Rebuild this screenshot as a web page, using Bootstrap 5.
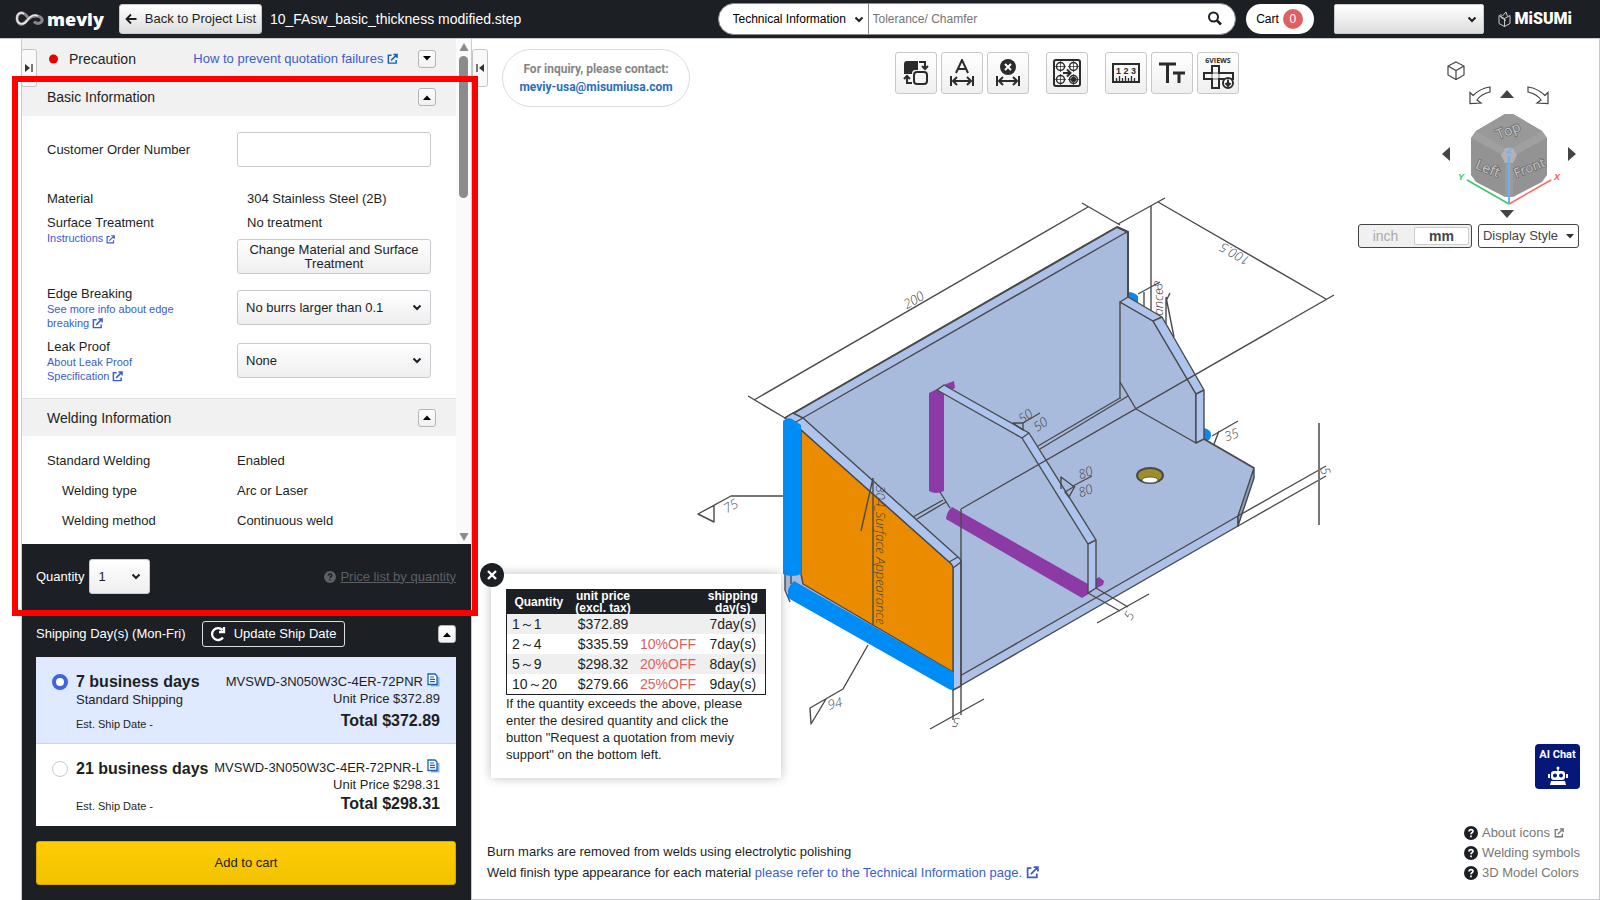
<!DOCTYPE html>
<html lang="en">
<head>
<meta charset="utf-8">
<meta name="viewport" content="width=device-width, initial-scale=1">
<title>meviy - 10_FAsw_basic_thickness modified.step</title>
<link href="https://cdn.jsdelivr.net/npm/bootstrap@5.3.0/dist/css/bootstrap.min.css" rel="stylesheet">
<style>
  :root { --ink: #1c1f24; --line: #c9c9cf; --link: #3c5ccf; }
  body { font-family: "Liberation Sans", Arial, sans-serif; font-size: 13px; line-height: 16px; color: var(--ink); background: #fff; }
  a { color: var(--link); text-decoration: none; }
  svg { display: block; flex: none; }
  .ext { display: inline-block; vertical-align: -2px; }
  .fit { min-height: 0; }
  .ink { color: var(--ink); }

  /* header */
  .topbar { height: 39px; background: var(--ink); border-bottom: 1px solid var(--line); padding: 0 28px 0 15px; }
  .brand-text { font: 900 18px/22px "Open Sans", sans-serif; color: #fff; margin-left: 3px; }
  .btn-grad { background: linear-gradient(#fff, #eee); border: 1px solid var(--line); border-radius: 3px; color: var(--ink); font-size: 13px; line-height: 14px; padding: 0 4px; }
  .btn-back { width: 143px; height: 30px; background: linear-gradient(#fff, #ddd); margin-left: 15px; }
  .file-name { font-size: 14px; color: #fff; margin-left: 8px; white-space: nowrap; }
  .search-box { width: 518px; height: 32px; background: #fff; border: 1px solid #8a8a8a; border-radius: 16px; overflow: hidden; padding: 0 12px 0 14px; }
  .search-box select, .search-box input { border: 0; background-color: #fff; font-size: 12px; height: 30px; outline: 0; color: #000; }
  .search-box select { width: 136px; border-right: 1px solid #888; }
  .search-box input::placeholder { color: #757575; }
  .chev { --cv: url("data:image/svg+xml,%3Csvg xmlns='http://www.w3.org/2000/svg' width='10' height='7'%3E%3Cpath d='M1.500 1.500l3.500 3.500 3.500-3.500' fill='none' stroke='%231c1f24' stroke-width='2'/%3E%3C/svg%3E");
    appearance: none; background-repeat: no-repeat; background-position: right 8px center; background-image: var(--cv); }
  .search-box .chev { background-position: right 4px center; }
  .cart-btn { width: 68px; height: 30px; border-radius: 15px; background: #fff; border: 0; font-size: 12px; color: #000; margin-left: 10px; }
  .cart-count { width: 20px; height: 20px; border-radius: 50%; background: #e06060; color: #fff; line-height: 20px; }
  .user-select { width: 150px; height: 30px; border: 1px solid var(--line); border-radius: 2px; background-image: var(--cv), linear-gradient(#fff, #ddd); background-position: right 6px center, 0 0; margin-left: 20px; }
  .misumi-logo { padding-left: 14px; }
  .misumi { font: 900 16px/20px Roboto, sans-serif; color: #fff; }

  /* side panel */
  .side { width: 451px; margin-left: 21px; border-left: 1px solid var(--line); border-right: 1px solid var(--line); }
  .sect-head { height: 38px; background: #f1f1f1; padding: 0 20px 0 25px; font-size: 14px; }
  .sect-head.first { height: 39px; }
  .sect-head .guide { font-size: 13px; margin-right: 20px; }
  .guide .ext { color: #1762b5; }
  .alert-dot { margin: 0 10px 0 2px; }
  .toggle { width: 18px; height: 18px; padding: 0; border: 1px solid #b5b5b5; border-radius: 3px; background: linear-gradient(#fff, #f0f0f0); }
  .sect-body { padding: 16px 25px 15px 25px; }
  .field-row { display: grid; grid-template-columns: 190px 1fr; }
  .field-row .note { font-size: 11px; line-height: 14px; }
  .row-edge { margin-top: 12px; }
  .row-leak { margin-top: 9px; }
  .indent { padding-left: 10px; }
  .ctl { height: 35px; width: 100%; border: 1px solid var(--line); border-radius: 3px; }
  select.ctl { background-image: var(--cv), linear-gradient(#fff, #eee); background-position: right 8px center, 0 0; padding: 0 8px; color: var(--ink); }
  .weld-list { padding: 10px 25px; }
  .weld-row { display: grid; grid-template-columns: 190px 1fr; height: 30px; align-items: center; }
  .weld-row .sub { padding-left: 15px; }
  .scroll-rail { width: 15px; background: #fafafa; padding: 4px 0 3px; }
  .scroll-thumb { width: 9px; height: 142px; border-radius: 5px; background: #8b8b8b; margin-top: 5px; }
  .edge-tab { position: absolute; top: 10px; width: 16px; height: 38px; padding: 0; border: 1px solid #c4c4c4; border-radius: 3px; background: #f9f9f9; z-index: 2; }
  .edge-tab.at-left { left: -1px; }
  .edge-tab.at-right { right: -17px; }
  .mark-frame { position: absolute; left: -10px; right: -7px; top: 37px; bottom: 284px; border: 6px solid #f00; z-index: 5; pointer-events: none; }

  .order { background: var(--ink); color: #fff; padding: 15px 15px 15px 14px; }
  .order-qty { width: 61px; margin-left: 5px; }
  .muted { color: #5d6064; --qm: #1c1f24; }
  .price-link { color: #5d6064; text-decoration: underline; }
  .ship-head { margin-top: 27px; }
  .ship-list { margin-top: 10px; }
  .btn-ship { width: 143px; height: 26px; border: 1px solid #ddd; border-radius: 3px; background: transparent; color: #fff; font-size: 13px; padding: 0; }
  .ship-opt { padding: 15px 16px 0 16px; height: 82px; background: #fff; color: var(--ink); }
  .ship-opt.picked { background: #dfe9ff; height: 87px; border-bottom: 1px solid #cdd3e0; }
  .ship-opt input { appearance: none; width: 16px; height: 16px; border-radius: 50%; border: 1px solid #c9c9cf; background: #fff; margin: 2px 8px 0 0; }
  .ship-opt input:checked { border: 4px solid #4165dc; }
  .ship-cost { line-height: 17px; }
  .ship-opt.picked .ship-cost { padding-top: 1px; }
  .days { font-size: 16px; font-weight: bold; line-height: 20px; white-space: nowrap; }
  .ship-cost .days { margin-top: 1px; }
  .picked .ship-cost .days { margin-top: 4px; }
  .est { font-size: 11px; }
  .btn-cart { height: 44px; margin-top: 15px; border: 1px solid #d9a800; border-radius: 3px; background: linear-gradient(#ffcd05, #f2c200); color: var(--ink); font-size: 13px; }

  /* viewer */
  .viewer { border-right: 1px solid var(--line); border-bottom: 1px solid var(--line); }
  .model { position: absolute; inset: 0; width: 100%; height: 100%; }
  .inquiry { width: 188px; height: 58px; margin: 10px 0 0 30px; border: 1px solid #ddd; border-radius: 29px; font: bold 12px/18px Roboto, sans-serif; color: #858585; background: #fff; }
  .inquiry a { color: #2a6ebb; }
  .tools { margin: 13px 119px 0 auto; gap: 17px; }
  .tool { width: 42px; height: 42px; padding: 0; border: 1px solid #c8c8c8; border-radius: 3px; background: linear-gradient(#fff, #efefef); display: flex; align-items: center; justify-content: center; }
  .navcol { width: 221px; margin-right: 20px; }
  .units { height: 24px; border: 1px solid #444; border-radius: 3px; background: #f0f0f0; width: 114px; }
  .units button { border: 0; background: transparent; color: #aaa; font-size: 14px; padding: 0; flex: 1; }
  .units .on { background: #fff; color: #444; font-weight: bold; border: 1px solid #ccc; border-radius: 2px; margin: 2px; }
  .style-btn { width: 101px; height: 24px; border: 1px solid #444; border-radius: 3px; background: #fff; color: #444; font-size: 13px; padding: 0; }
  .price-pop { position: absolute; left: 19px; bottom: 121px; width: 290px; height: 204px; background: #fff; box-shadow: 0 0 10px rgba(0,0,0,.25); padding: 15px; line-height: 17px; }
  .pop-close { position: absolute; left: -11px; top: -11px; width: 24px; height: 24px; border: 0; border-radius: 50%; background: var(--ink); padding: 0; }
  .price-tbl { width: 260px; border: 1px solid var(--ink); font-size: 14px; border-collapse: collapse; }
  .price-tbl th { background: var(--ink); color: #fff; font-size: 12px; line-height: 12px; text-align: center; height: 24px; padding: 0; }
  .price-tbl td { height: 20px; line-height: 20px; padding: 0; text-align: center; }
  .price-tbl td:first-child { text-align: left; padding-left: 5px; }
  .price-tbl tbody tr:nth-child(odd) { background: #efefef; }
  .w-range { width: 64px; }
  .w-rest { width: 65px; }
  .off { color: #e06060; }
  .viewer-foot { padding: 0 19px 16px 15px; }
  .ai-chat { width: 45px; height: 45px; border: 0; border-radius: 4px; background: #06177a; color: #fff; font: bold 11px/14px Roboto, sans-serif; padding: 0; }
  .help { margin-top: 34px; }
  .help a { color: #777; font-size: 13px; line-height: 20px; }
  .foot-notes { line-height: 21px; }
</style>
</head>
<body>
<svg width="0" height="0" class="position-absolute" aria-hidden="true">
  <symbol id="ext" viewBox="0 0 12 12"><path d="M5 2H1.500v8.500H10V7M4.500 7.500L10.500 1.500M7 1h4v4" fill="none" stroke="currentColor" stroke-width="1.600"/></symbol>
  <symbol id="up" viewBox="0 0 8 5"><path d="M4 .5L8 5H0z"/></symbol>
  <symbol id="dn" viewBox="0 0 8 5"><path d="M4 4.500L8 0H0z"/></symbol>
  <symbol id="q" viewBox="0 0 14 14"><circle cx="7" cy="7" r="7" fill="currentColor"/><path d="M5 5.500c0-2.700 4-2.500 4-.2C9 6.700 7 6.600 7 8.300M7 9.500v1.700" fill="none" stroke="var(--qm,#fff)" stroke-width="1.700"/></symbol>
  <symbol id="copy" viewBox="0 0 13 14"><path d="M10 4h2.500v9.500H4V12" fill="#8ab4e0"/><path d="M1 1h7l2 2v8.500H1z" fill="#fff" stroke="#1d64ad" stroke-width="1.300"/><path d="M3 4h4M3 6.300h5M3 8.700h5" stroke="#1d64ad" stroke-width="1.200"/></symbol>
</svg>

<div class="d-flex flex-column vh-100 overflow-hidden">
  <header class="topbar d-flex align-items-center flex-shrink-0">
    <svg width="29" height="16" viewBox="0 0 29 16" fill="none"><path d="M14 8C10 2 7 1.500 5.500 2 1 3.500 1 11 5 13c4 1.500 6-3 9-5.500C18 4 25 4 27 8c1 4-5 6-8 2.500" stroke="#8b8587" stroke-width="3"/><path d="M9 3C5 0 1 4 2 8.500c1 5 7 6 10 1 3-4 7-6.500 11-4.500" stroke="#e8e4e4" stroke-width="1.700"/></svg>
    <span class="brand-text">meviy</span>
    <button class="btn-grad btn-back d-flex align-items-center justify-content-center gap-2" type="button">
      <svg width="12" height="12" viewBox="0 0 12 12" fill="none" stroke="#1c1f24" stroke-width="1.800"><path d="M11.500 6H2M6 1.500L1.500 6 6 10.500"/></svg>
      <span>Back to Project List</span>
    </button>
    <span class="file-name">10_FAsw_basic_thickness modified.step</span>
    <form class="search-box d-flex align-items-center ms-auto">
      <select class="chev" aria-label="Search category"><option>Technical Information</option></select>
      <input class="flex-grow-1 px-1" type="text" placeholder="Tolerance/ Chamfer" aria-label="Search">
      <button class="border-0 bg-transparent p-0" type="button" aria-label="Search"><svg width="16" height="16" viewBox="0 0 16 16" fill="none" stroke="#1c1f24" stroke-width="2"><circle cx="6.500" cy="6" r="4.500"/><path d="M10 9.500l4 4" stroke-width="2.500"/></svg></button>
    </form>
    <button class="cart-btn d-flex align-items-center justify-content-center gap-1 p-0" type="button">Cart <span class="cart-count">0</span></button>
    <select class="user-select chev" aria-label="Account"><option></option></select>
    <div class="misumi-logo d-flex align-items-center gap-1">
      <svg width="13" height="17" viewBox="0 0 13 17" fill="none" stroke="#ccc"><path d="M1 4.500l5.500 3v8L1 12.500zM6.500 7.500L12 4.500v8l-5.500 3M3 3v3.500l5 3M4.500 5L8 1l1.500 4.500"/></svg>
      <span class="misumi">MiSUMi</span>
    </div>
  </header>

  <div class="d-flex flex-grow-1 fit">
    <aside class="side position-relative d-flex flex-column flex-shrink-0">
      <button class="edge-tab at-left" type="button" aria-label="Collapse left"><svg class="mx-auto" width="8" height="8" viewBox="0 0 8 8"><path d="M0 0l5 4-5 4z" fill="#333"/><path d="M7 0v8" stroke="#333" stroke-width="1.300"/></svg></button>
      <button class="edge-tab at-right" type="button" aria-label="Collapse panel"><svg class="mx-auto" width="8" height="8" viewBox="0 0 8 8"><path d="M8 0L3 4l5 4z" fill="#333"/><path d="M1 0v8" stroke="#333" stroke-width="1.300"/></svg></button>

      <div class="d-flex flex-grow-1 overflow-hidden fit">
        <div class="flex-grow-1 overflow-hidden">
          <div class="sect-head first d-flex align-items-center">
            <svg width="10" height="10" viewBox="0 0 10 10" class="alert-dot"><circle cx="4.500" cy="5" r="4.500" fill="#e60000"/></svg>
            <span>Precaution</span>
            <a class="guide ms-auto" href="#">How to prevent quotation failures <svg class="ext" width="11" height="12"><use href="#ext"/></svg></a>
            <button class="toggle" type="button" aria-label="Expand"><svg class="mx-auto" width="8" height="5"><use href="#dn"/></svg></button>
          </div>
          <div class="sect-head d-flex align-items-center justify-content-between">Basic Information
            <button class="toggle" type="button" aria-label="Fold"><svg class="mx-auto" width="8" height="5"><use href="#up"/></svg></button>
          </div>
          <div class="sect-body">
            <div class="field-row align-items-center">
              <label for="order-no">Customer Order Number</label>
              <input class="ctl" id="order-no" type="text">
            </div>
            <div class="field-row mt-4">
              <div>
                <div>Material</div>
                <div class="mt-1 pt-1">Surface Treatment</div>
                <a class="note d-block" href="#">Instructions <svg class="ext" width="9" height="9"><use href="#ext"/></svg></a>
              </div>
              <div>
                <div class="indent">304 Stainless Steel (2B)</div>
                <div class="indent mt-2">No treatment</div>
                <button class="btn-grad ctl mt-2" type="button">Change Material and Surface Treatment</button>
              </div>
            </div>
            <div class="field-row row-edge">
              <div>
                <label for="edge">Edge Breaking</label>
                <a class="note d-block" href="#">See more info about edge<br>breaking <svg class="ext" width="11" height="11"><use href="#ext"/></svg></a>
              </div>
              <select class="ctl chev mt-1" id="edge"><option>No burrs larger than 0.1</option></select>
            </div>
            <div class="field-row row-leak">
              <div>
                <label for="leak">Leak Proof</label>
                <a class="note d-block" href="#">About Leak Proof<br>Specification <svg class="ext" width="11" height="11"><use href="#ext"/></svg></a>
              </div>
              <select class="ctl chev mt-1" id="leak"><option>None</option></select>
            </div>
          </div>
          <div class="sect-head border-top d-flex align-items-center justify-content-between">Welding Information
            <button class="toggle" type="button" aria-label="Fold"><svg class="mx-auto" width="8" height="5"><use href="#up"/></svg></button>
          </div>
          <div class="weld-list">
            <div class="weld-row"><span>Standard Welding</span><span>Enabled</span></div>
            <div class="weld-row"><span class="sub">Welding type</span><span>Arc or Laser</span></div>
            <div class="weld-row"><span class="sub">Welding method</span><span>Continuous weld</span></div>
          </div>
        </div>
        <div class="scroll-rail d-flex flex-column align-items-center flex-shrink-0">
          <svg width="10" height="8" viewBox="0 0 8 7"><path d="M4 0l4 7H0z" fill="#8b8b8b"/></svg>
          <div class="scroll-thumb"></div>
          <svg width="10" height="8" viewBox="0 0 8 7" class="mt-auto"><path d="M4 7l4-7H0z" fill="#8b8b8b"/></svg>
        </div>
      </div>

      <div class="order">
        <div class="d-flex align-items-center">
          <label for="qty">Quantity</label>
          <select class="ctl chev order-qty" id="qty"><option>1</option></select>
          <span class="ms-auto d-flex align-items-center gap-1 muted"><svg width="12" height="12"><use href="#q"/></svg><a class="price-link" href="#">Price list by quantity</a></span>
        </div>
        <div class="ship-head d-flex align-items-center">
          <span>Shipping Day(s) (Mon-Fri)</span>
          <button class="btn-ship d-flex align-items-center justify-content-center gap-2 ms-3" type="button"><svg width="16" height="16" viewBox="0 0 16 16" fill="none" stroke="#fff" stroke-width="2.300"><path d="M13 11.500A6 6 0 1 1 12.500 4M14 1v5H9"/></svg>Update Ship Date</button>
          <button class="toggle ms-auto" type="button" aria-label="Fold"><svg class="mx-auto" width="8" height="5"><use href="#up"/></svg></button>
        </div>
        <div class="ship-list">
          <label class="ship-opt picked d-flex">
            <input type="radio" name="ship" checked>
            <span class="d-flex flex-column"><span class="days">7 business days</span><span>Standard Shipping</span><span class="est mt-2">Est. Ship Date -</span></span>
            <span class="ship-cost d-flex flex-column align-items-end ms-auto"><span class="d-flex gap-1 text-nowrap">MVSWD-3N050W3C-4ER-72PNR <svg width="13" height="14"><use href="#copy"/></svg></span><span>Unit Price $372.89</span><span class="days">Total $372.89</span></span>
          </label>
          <label class="ship-opt d-flex">
            <input type="radio" name="ship">
            <span class="d-flex flex-column"><span class="days">21 business days</span><span class="est mt-auto mb-2 pb-1">Est. Ship Date -</span></span>
            <span class="ship-cost d-flex flex-column align-items-end ms-auto"><span class="d-flex gap-1 text-nowrap">MVSWD-3N050W3C-4ER-72PNR-L <svg width="13" height="14"><use href="#copy"/></svg></span><span>Unit Price $298.31</span><span class="days">Total $298.31</span></span>
          </label>
        </div>
        <button class="btn-cart w-100" type="button">Add to cart</button>
      </div>
      <div class="mark-frame"></div>
    </aside>

    <main class="viewer position-relative flex-grow-1 d-flex flex-column">
      <svg class="model" viewBox="472 39 1127 860" role="img" aria-label="Welded bracket model">
        <g stroke="#4a4a4a" stroke-width="1.400" fill="none" stroke-linejoin="round">
          <!-- dimension and leader lines behind the part -->
          <path d="M1151 206V312M1138 294l22-12M1144 292v14M1166 297v30M1166 297l8 40M1170 293l-4 8"/>
          <path d="M1128 292q6 0 10 4v10h-10zM1204 428q8 2 7 8-1 6-7 5z" fill="#0a86ec" stroke="none"/>
          <!-- body -->
          <path d="M785 418L1117 227l11 5v65l76 142 50 29v10l-16 48-285 164L794 598l-9-8z" fill="#a9bbdd" stroke="none"/>
          <path d="M785 418L1117 227l11 5-3 1L794 423z" fill="#adc0e6"/>
          <path d="M1117 227l11 5v66" stroke-width="2"/><path d="M785 418L1117 227" stroke-width="2"/>
          <path d="M953 680l285-164v10L953 690z" fill="#adc0e6"/>
          <path d="M1238 516l16-48v10l-16 48z" fill="#8fa3c9"/><path d="M1204 439l50 29" stroke-width="2"/>
          <path d="M913 517l30-17M917 519l29-17M1038 446l82-48M1040 449l88-53"/>
          <ellipse cx="1150" cy="475.500" rx="13" ry="7.500" fill="#a08c28" stroke-width="2"/><ellipse cx="1150" cy="480" rx="8" ry="3" fill="#fff" stroke-width=".8"/>
          <!-- right gusset -->
          <path d="M1120 302l33 19 43 73v49l-60-34-16-27z" fill="#a9bbdd"/>
          <path d="M1120 302l8-5 34 20 42 73v49l-8 4v-49l-43-73z" fill="#adc5ee"/>
          <path d="M1153 321l9-4M1196 394l8-4M1120 382v17"/>
          <!-- centre gusset and its welds -->
          <path d="M929 393l8-4 9-5 8-3 1 7-11 6v97q-8 4-15 0z" fill="#8c3aa6" stroke="none"/>
          <path d="M952 507l136 77 11-7 5 4-1 4-8 4-8 6-5 3-136-79q1-8 6-12z" fill="#8c3aa6" stroke="none"/>
          <path d="M937 390l85 48 66 106v49l8-5v-48l-67-107-85-48z" fill="#adc5ee"/>
          <path d="M1022 438l7-5M1088 544l8-4M940 492l10 16"/>
          <!-- left plate -->
          <path d="M785 418l8-5 10 5 155 139q3 2 3 5v124l-8 4V568l-4-6L801 430z" fill="#adc5ee"/>
          <path d="M949 562l9-5M953 568l8-6M794 423l9-5M785 574v16l5 12M791 574v10"/>
          <path d="M801 430l148 132q4 3 4 6v104L803 584l-2-10z" fill="#eb8c00"/>
          <path d="M783 421q4-4 9-2l9 6v149q-9 4-18 0z" fill="#008cf5" stroke="none"/>
          <path d="M794 581l159 91v18q-4 0-6-2L788 598q-2-10 6-17z" fill="#008cf5" stroke="none"/>
          <!-- dimensions over the part -->
          <path d="M1118 224l47-26M1158 202l168 97M1334 295L961 509M961 509V715M953 690v30M1088 207L754 400M1082 203l38 22M748 396l37 22"/>
          <path d="M783 496h-52l-33 18 16 8v-17M868 645l-25 44-33 19 1 16 15-25M930 729l54-30M873 478v147M873 478l-12 53"/>
          <path d="M1040 413l-17 10h-10l10 7v-7M1092 476l-19 10-12-9v12M1075 486l-10 6 4 5 6-11"/>
          <path d="M1088 593l32 18M1096 588l32 19M1097 623l52-29M1238 516l88-50M1238 526l88-50M1212 436l26-15M1219 431l-5 13"/>
          <path d="M1319 423v102" stroke="#777" stroke-width="2"/>
        </g>
        <g fill="#444" font-family="Open Sans, sans-serif" font-size="13" font-weight="300" font-style="italic" text-anchor="middle">
          <text transform="translate(916 304) rotate(-30)">200</text>
          <text transform="translate(1237 250) rotate(210)">100.5</text>
          <text transform="translate(733 510) rotate(-30)">75</text>
          <text transform="translate(836 708) rotate(-15)">94</text>
          <text transform="translate(876 555) rotate(90)">304_Surface Appearance</text>
          <text transform="translate(1163 302) rotate(-90)">ance</text>
          <text transform="translate(1162 288) rotate(-60)">8</text>
          <text transform="translate(1028 420) rotate(-35)">50</text>
          <text transform="translate(1043 428) rotate(-35)">50</text>
          <text transform="translate(1087 477) rotate(-20)">80</text>
          <text transform="translate(1087 495) rotate(-20)">80</text>
          <text transform="translate(1233 439) rotate(-20)">35</text>
          <text transform="translate(1321 472) rotate(75)">5</text>
          <text transform="translate(1133 618) rotate(-60)">5</text>
          <text transform="translate(957 718) rotate(190)">5</text>
        </g>
      </svg>

      <div class="position-relative d-flex align-items-start">
        <div class="inquiry d-flex flex-column align-items-center justify-content-center text-nowrap"><span>For inquiry, please contact:</span><a href="#">meviy-usa@misumiusa.com</a></div>
        <div class="tools d-flex">
          <div class="d-flex gap-1">
            <button class="tool" type="button" aria-label="Swap faces"><svg width="26" height="26" viewBox="0 0 26 26" fill="none" stroke="#2b2b2b" stroke-width="2"><path d="M1 14V4q0-3 3-3h11v9h-3q-3 0-3 4z" fill="#2b2b2b" stroke="none"/><rect x="11" y="12" width="13" height="12" rx="3"/><path d="M16 2h6v6M19 6l3 3 3-3M9 23H4v-6M1 19l3-3 3 3"/></svg></button>
            <button class="tool" type="button" aria-label="Add dimension"><svg width="26" height="28" viewBox="0 0 26 28" fill="none" stroke="#2b2b2b" stroke-width="2"><path d="M7 14l6-13 6 13M9 10h8M2 17v10M24 17v10M4 22h18M8 18l-4 4 4 4M18 18l4 4-4 4"/></svg></button>
            <button class="tool" type="button" aria-label="Delete dimension"><svg width="26" height="28" viewBox="0 0 26 28" fill="none" stroke="#2b2b2b" stroke-width="2"><circle cx="13" cy="8" r="8" fill="#2b2b2b" stroke="none"/><path d="M10 5l6 6M16 5l-6 6" stroke="#fff"/><path d="M2 17v10M24 17v10M4 22h18M8 18l-4 4 4 4M18 18l4 4-4 4"/></svg></button>
          </div>
          <button class="tool" type="button" aria-label="Hole groups"><svg width="28" height="28" viewBox="0 0 28 28" fill="none" stroke="#2b2b2b" stroke-width="1.500"><rect x="1" y="1" width="26" height="26" rx="2" stroke-width="2"/><circle cx="7.500" cy="7.500" r="4"/><circle cx="20.500" cy="7.500" r="4"/><circle cx="7.500" cy="20.500" r="4"/><circle cx="20.500" cy="20.500" r="4"/><circle cx="20.500" cy="20.500" r="2" fill="#2b2b2b"/><path d="M7.500 2v11M2 7.500h11M20.500 2v11M15 7.500h11M7.500 15v11M2 20.500h11M20.500 15v11M15 20.500h11" stroke-width=".7"/><path d="M10 14h7M14 10.500l3.500 3.500-3.500 3.500" stroke-width="2"/></svg></button>
          <div class="d-flex gap-1">
            <button class="tool" type="button" aria-label="Measure"><svg width="28" height="20" viewBox="0 0 28 20" fill="none" stroke="#2b2b2b"><rect x="1" y="1" width="26" height="18" stroke-width="2"/><path d="M4.500 18v-3M7.500 18v-5M10.500 18v-3M13.500 18v-5M16.500 18v-3M19.500 18v-5M22.500 18v-3" stroke-width="1.300"/><text x="14" y="11" text-anchor="middle" font-family="Liberation Sans" font-size="9" font-weight="bold" fill="#2b2b2b" stroke="none">1 2 3</text></svg></button>
            <button class="tool" type="button" aria-label="Text size"><svg width="26" height="22" viewBox="0 0 26 22" fill="none" stroke="#2b2b2b" stroke-width="3"><path d="M0 2h17M8.500 2v19M14 11h12M20 11v10"/></svg></button>
            <button class="tool" type="button" aria-label="6 views"><svg width="32" height="34" viewBox="0 0 32 34" fill="none" stroke="#2b2b2b" stroke-width="2"><text x="16" y="7" text-anchor="middle" font-family="Open Sans" font-size="7" font-weight="bold" fill="#2b2b2b" stroke="none">6VIEWS</text><path d="M10 10h7v7h14v6H17v9h-7v-9H2v-6h8z"/><path d="M10 17h7v6h-7z" stroke-width=".7"/><circle cx="26" cy="27" r="5" fill="#fff"/><path d="M26 23.500v6M23.500 27l2.500 3 2.500-3"/></svg></button>
          </div>
        </div>
        <div class="navcol">
          <svg width="221" height="185" viewBox="1358 39 221 185" role="img" aria-label="View cube">
            <g fill="none" stroke="#444" stroke-width="1.200"><path d="M1456 62l8 4v9l-8 4.500-8-4.500v-9zM1448 66l8 4.500 8-4.500M1456 70.500v9"/>
            <path d="M1490 87v5q-9 2-13 8l4 3-11 .5v-11l3 3q7-7 17-8.500zM1528 87v5q9 2 13 8l-4 3 11 .5v-11l-3 3q-7-7-17-8.500z"/></g>
            <g fill="#444"><path d="M1507 90l7 8h-14zM1507 218l7-8h-14zM1442 154l8-7v14zM1576 154l-8-7v14z"/></g>
            <path d="M1505 114h8l29 17 5 7v37l-5 7-29 15h-8l-29-15-5-7v-37l5-7z" fill="#939393"/>
            <path d="M1476 131l29-17h8l29 17-29 17h-8z" fill="#999"/>
            <path d="M1471 138l5-7 29 17-4 6zM1547 138l-5-7-29 17 4 6z" fill="#a0a0a0"/><path d="M1505 164h8v33h-8z" fill="#9b9b9b"/>
            <path d="M1505 148h8l4 7-4 8h-8l-4-8z" fill="#b2b2b2"/>
            <g font-family="Open Sans, sans-serif" font-size="14" fill="#c4c4c4" stroke="#6f6f6f" stroke-width="1.600" paint-order="stroke" text-anchor="middle"><text transform="translate(1510 135) rotate(-22)">Top</text><text transform="translate(1486 173) rotate(22)">Left</text><text font-size="13" transform="translate(1531 172) rotate(-22)">Front</text></g>
            <g stroke-width="1.500"><path d="M1509 204l-42-24" stroke="#3c6"/><path d="M1509 204l42-24" stroke="#f66"/><path d="M1509 204v-48" stroke="#6ab0f5" stroke-width="2"/></g>
            <g font-family="Liberation Sans" font-size="9" font-weight="bold" font-style="italic" text-anchor="middle"><text x="1461" y="180" fill="#3c6">Y</text><text x="1557" y="180" fill="#f55">X</text><text x="1509" y="153" fill="#6ab0f5">Z</text></g>
          </svg>
          <div class="d-flex justify-content-between">
            <div class="units d-flex"><button type="button">inch</button><button class="on" type="button">mm</button></div>
            <button class="style-btn d-flex align-items-center justify-content-center gap-2" type="button">Display Style <svg width="8" height="5" fill="#333"><use href="#dn"/></svg></button>
          </div>
        </div>
      </div>

      <section class="price-pop" aria-label="Price list">
        <button class="pop-close" type="button" aria-label="Close"><svg class="mx-auto" width="10" height="10" viewBox="0 0 10 10" stroke="#fff" stroke-width="2.300"><path d="M1 1l8 8M9 1l-8 8"/></svg></button>
        <table class="price-tbl">
          <thead><tr><th class="w-range">Quantity</th><th>unit price<br>(excl. tax)</th><th class="w-rest"></th><th class="w-rest">shipping<br>day(s)</th></tr></thead>
          <tbody>
            <tr><td>1～1</td><td>$372.89</td><td></td><td>7day(s)</td></tr>
            <tr><td>2～4</td><td>$335.59</td><td class="off">10%OFF</td><td>7day(s)</td></tr>
            <tr><td>5～9</td><td>$298.32</td><td class="off">20%OFF</td><td>8day(s)</td></tr>
            <tr><td>10～20</td><td>$279.66</td><td class="off">25%OFF</td><td>9day(s)</td></tr>
          </tbody>
        </table>
        If the quantity exceeds the above, please enter the desired quantity and click the button "Request a quotation from meviy support" on the bottom left.
      </section>

      <div class="viewer-foot position-relative mt-auto d-flex align-items-end justify-content-between">
        <div class="foot-notes">Burn marks are removed from welds using electrolytic polishing<br>Weld finish type appearance for each material <a href="#">please refer to the Technical Information page. <svg class="ext" width="13" height="13"><use href="#ext"/></svg></a></div>
        <div class="d-flex flex-column align-items-end">
          <button class="ai-chat d-flex flex-column align-items-center justify-content-center gap-1" type="button">AI Chat
            <svg width="22" height="20" viewBox="0 0 22 20" fill="#fff"><circle cx="11" cy="2" r="1.500"/><path d="M10.400 2h1.200v4h-1.200zM7 5h8q3 0 3 3v3q0 3-3 3H7q-3 0-3-3V8q0-3 3-3zM1 8h2v4H1zM19 8h2v4h-2zM4 15h14l1 4H3z"/><circle cx="8" cy="9.500" r="2" fill="#06177a"/><circle cx="14" cy="9.500" r="2" fill="#06177a"/></svg></button>
          <ul class="help list-unstyled mb-0">
            <li><a class="d-flex align-items-center gap-1" href="#"><svg class="ink" width="14" height="14"><use href="#q"/></svg>About icons <svg width="10" height="10"><use href="#ext"/></svg></a></li>
            <li><a class="d-flex align-items-center gap-1" href="#"><svg class="ink" width="14" height="14"><use href="#q"/></svg>Welding symbols</a></li>
            <li><a class="d-flex align-items-center gap-1" href="#"><svg class="ink" width="14" height="14"><use href="#q"/></svg>3D Model Colors</a></li>
          </ul>
        </div>
      </div>
    </main>
  </div>
</div>
<script src="https://cdn.jsdelivr.net/npm/bootstrap@5.3.0/dist/js/bootstrap.bundle.min.js"></script>
</body>
</html>
